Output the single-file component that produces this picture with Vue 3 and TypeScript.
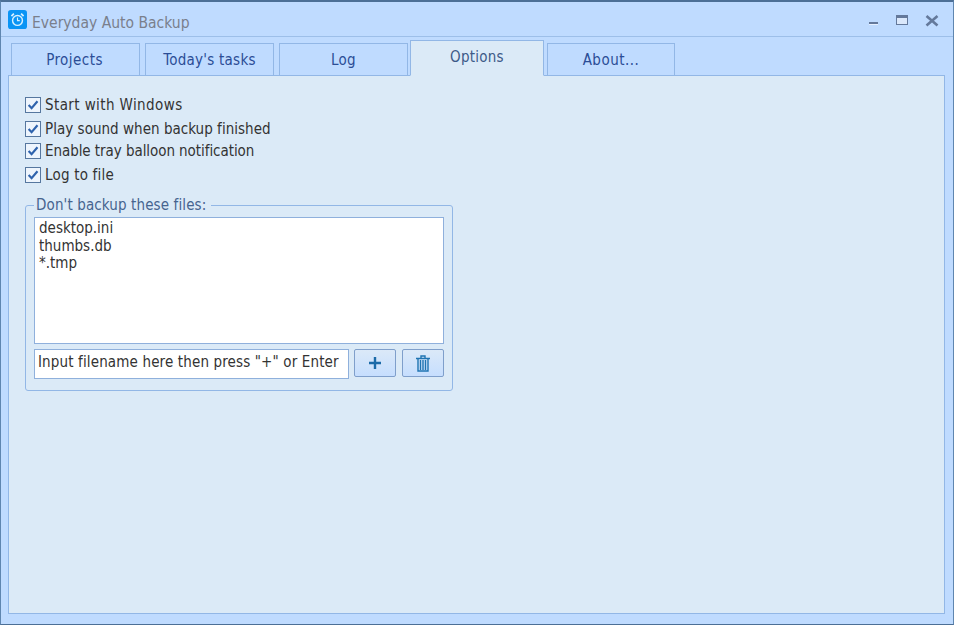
<script setup lang="ts">
const tabs = [
  { label: "Projects", active: false },
  { label: "Today's tasks", active: false },
  { label: "Log", active: false },
  { label: "Options", active: true },
  { label: "About...", active: false },
];
const options = [
  "Start with Windows",
  "Play sound when backup finished",
  "Enable tray balloon notification",
  "Log to file",
];
</script>

<template>
  <div class="window">
    <header class="titlebar">
      <svg class="logo" width="19" height="19" viewBox="0 0 20 20">
        <rect width="20" height="20" rx="3" fill="#0a94f5" />
        <circle cx="10" cy="11" r="5.2" fill="none" stroke="#d8f0ff" stroke-width="1.5" />
        <path d="M10 8v3.2h2.4" fill="none" stroke="#d8f0ff" stroke-width="1.2" />
        <path d="M3.6 6.4 6.2 3.8M16.4 6.4 13.8 3.8" stroke="#d8f0ff" stroke-width="1.8" />
      </svg>
      <span class="title">Everyday Auto Backup</span>
      <div class="controls">
        <svg width="12" height="12" viewBox="0 0 12 12"><rect x="1" y="7" width="9" height="2" fill="#64799b" /><rect x="1" y="9" width="9" height="1" fill="#e6f0ff" /></svg>
        <svg width="13" height="12" viewBox="0 0 13 12"><rect x="0.5" y="0.5" width="11" height="9" fill="#dbe8fb" stroke="#64799b" /><rect x="0" y="0" width="12" height="3" fill="#64799b" /></svg>
        <svg width="14" height="12" viewBox="0 0 14 12"><path d="M1.5 1 12.5 10.5M12.5 1 1.5 10.5" stroke="#64799b" stroke-width="2.6" /></svg>
      </div>
    </header>

    <nav class="tabs">
      <div v-for="t in tabs" :key="t.label" class="tab" :class="{ active: t.active }">{{ t.label }}</div>
    </nav>

    <main class="panel">
      <label v-for="o in options" :key="o" class="check">
        <span class="box">
          <svg width="12" height="12" viewBox="0 0 11 11"><path d="M1.5 5.5 4.2 8.4 9.6 2" fill="none" stroke="#2f63ad" stroke-width="2" /></svg>
        </span>
        <span>{{ o }}</span>
      </label>

      <fieldset class="group">
        <legend>Don't backup these files:</legend>
        <div class="list">
          <div>desktop.ini</div>
          <div>thumbs.db</div>
          <div>*.tmp</div>
        </div>
        <div class="input-row">
          <div class="input">Input filename here then press "+" or Enter</div>
          <button class="btn" type="button">
            <svg width="14" height="14" viewBox="0 0 14 14"><path d="M7 1v12M1 7h12" stroke="#1b6aa8" stroke-width="2.4" /></svg>
          </button>
          <button class="btn" type="button">
            <svg width="14" height="17" viewBox="0 0 14 17">
              <path d="M0 3.5h14M5 3V1h4v2" fill="none" stroke="#1f74b2" stroke-width="1.4" />
              <path d="M2 4v12h10V4M4.5 5v10M7 5v10M9.5 5v10" fill="none" stroke="#1f74b2" stroke-width="1.4" />
            </svg>
          </button>
        </div>
      </fieldset>
    </main>
  </div>
</template>

<style>
html, body { margin: 0; }
</style>

<style scoped>
.window {
  width: 954px;
  height: 625px;
  box-sizing: border-box;
  background: #bfdbff;
  border: 1px solid #4c6f96;
  border-top-width: 2px;
  border-left-color: #5f86b0;
  border-right-color: #5f86b0;
  font-family: "DejaVu Sans Condensed", "DejaVu Sans", sans-serif;
  font-stretch: condensed;
  font-size: 15px;
  color: #333;
  display: flex;
  flex-direction: column;
  overflow: hidden;
}
.titlebar {
  height: 35px;
  flex: none;
  box-sizing: border-box;
  border-bottom: 1px solid #9dbfe9;
  display: flex;
  align-items: center;
  padding: 0 14px 0 7px;
}
.logo { margin-right: 5px; }
.title { color: #7a7f8c; font-size: 15.5px; padding-top: 7px; }
.controls {
  margin-left: auto;
  display: flex;
  align-items: center;
  gap: 16px;
  padding-top: 4px;
}
.tabs {
  height: 39px;
  flex: none;
  display: flex;
  align-items: flex-end;
  padding-left: 10px;
  margin-bottom: -1px;
  position: relative;
  z-index: 1;
}
.tab {
  width: 129px;
  height: 33px;
  box-sizing: border-box;
  margin-right: 5px;
  border: 1px solid #92b7e6;
  background: #bfdbff;
  color: #2b4d96;
  letter-spacing: 0.25px;
  display: flex;
  align-items: center;
  justify-content: center;
}
.tab:nth-child(1) { letter-spacing: 0.45px; padding-right: 2px; }
.tab:nth-child(3) { margin-right: 2px; }
.tab:nth-child(5) { width: 128px; letter-spacing: 0.5px; }
.tab.active {
  width: 134px;
  height: 36px;
  margin-right: 3px;
  background: #dbeaf7;
  border-bottom-color: #dbeaf7;
  color: #3d5a88;
  padding-bottom: 3px;
}
.panel {
  margin: 0 8px 10px 7px;
  flex: 1;
  box-sizing: border-box;
  border: 1px solid #92b7e6;
  background: #dbeaf7;
  padding: 17px 16px 0 17px;
}
.check {
  display: flex;
  align-items: center;
  height: 23px;
  gap: 4px;
}
.check:nth-child(1) { letter-spacing: 0.4px; }
.check:nth-child(2) { margin-top: 1px; letter-spacing: 0.03px; }
.check:nth-child(3) { margin-top: -1px; letter-spacing: -0.06px; }
.check:nth-child(4) { margin-top: 1px; letter-spacing: 0.2px; }
.box {
  width: 16px;
  height: 16px;
  margin-left: -1px;
  box-sizing: border-box;
  border: 1px solid #56779f;
  background: #eef5fd;
  display: flex;
  align-items: center;
  justify-content: center;
}
.group {
  width: 428px;
  height: 195px;
  box-sizing: border-box;
  margin: 10px 0 0 -1px;
  padding: 3px 8px 0 8px;
  border: 1px solid #92b7e6;
  border-radius: 3px;
}
legend {
  color: #46648f;
  padding: 0 5px 0 2px;
  margin-left: 0;
  letter-spacing: 0.12px;
}
.list {
  height: 127px;
  box-sizing: border-box;
  background: #fff;
  border: 1px solid #8fb0dc;
  padding: 2px 4px;
  line-height: 17.5px;
}
.input-row {
  display: flex;
  gap: 5px;
  margin-top: 5px;
}
.input {
  width: 315px;
  height: 30px;
  box-sizing: border-box;
  background: #fff;
  border: 1px solid #8fb0dc;
  padding: 0 3px;
  line-height: 25px;
  letter-spacing: 0.14px;
  white-space: nowrap;
  overflow: hidden;
}
.btn {
  width: 42px;
  height: 28px;
  padding: 0;
  box-sizing: border-box;
  border: 1px solid #7f9fcb;
  border-radius: 2px;
  background: linear-gradient(#dbe9f8, #c6defe);
  display: flex;
  align-items: center;
  justify-content: center;
}
.btn + .btn { margin-left: 1px; }
</style>
